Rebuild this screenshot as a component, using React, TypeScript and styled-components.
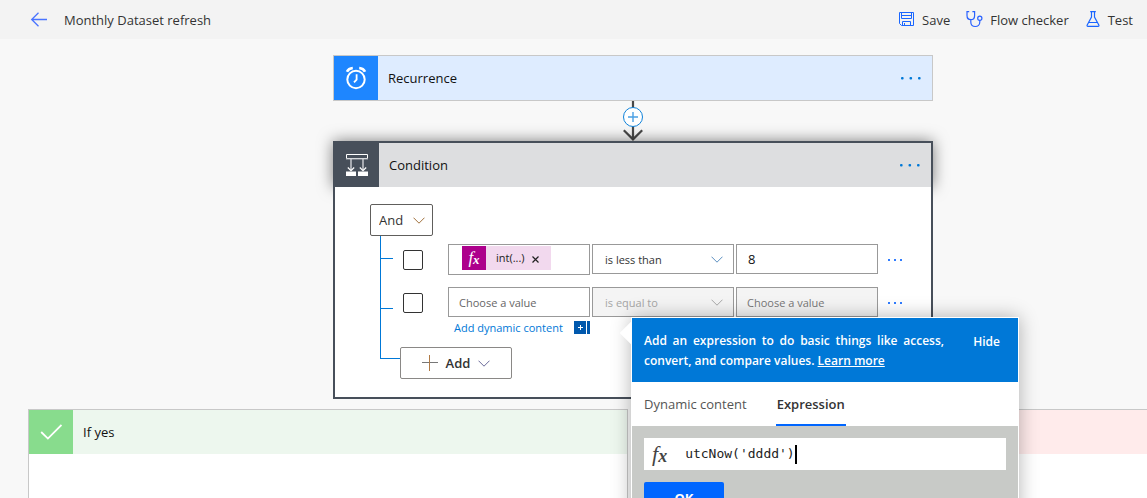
import React from "react";
import styled, { createGlobalStyle, css } from "styled-components";

const blue = "#0078d7";
const line = "#c8c8c8";
const slate = "#474f5a";

const GlobalStyle = createGlobalStyle`
  *, *::before, *::after { box-sizing: border-box; }
  body {
    margin: 0;
    background: #f8f8f8;
    color: #111;
    font: 13px/20px "Open Sans", "Noto Sans", sans-serif;
    overflow: hidden;
  }
  button, input, select { font: inherit; color: inherit; margin: 0; }
  button { cursor: pointer; }
`;

const Page = styled.div`
  height: 100vh;
  display: flex;
  flex-direction: column;
  overflow: hidden;
`;

const TopBar = styled.header`
  flex: none;
  height: 39px;
  padding: 0 14px 0 30px;
  display: flex;
  align-items: center;
  background: #f3f3f3;
  color: #333;
`;

const FlowTitle = styled.h1`
  flex: 1;
  margin: 0 0 0 16px;
  font-size: 13px;
  font-weight: 400;
`;

const Commands = styled.nav`
  display: flex;
  gap: 16px;
`;

const Command = styled.button`
  display: flex;
  align-items: center;
  gap: 7px;
  padding: 0;
  border: 0;
  background: none;
  white-space: nowrap;
`;

const Canvas = styled.main`
  flex: 1;
  padding: 16px 28px 0;
`;

const Flow = styled.div`
  min-width: 1210px;
  display: flex;
  flex-direction: column;
  align-items: center;
`;

const Step = styled.section`
  position: relative;
  width: 600px;
`;

const StepHeader = styled.div<{ $bg: string; $selected?: boolean }>`
  display: flex;
  align-items: center;
  height: 46px;
  padding-right: 10px;
  border: 1px solid ${line};
  background: ${(p) => p.$bg};
  ${(p) =>
    p.$selected &&
    css`
      border: 2px solid ${slate};
      border-bottom: 0;
      box-shadow: 0 0 15px rgba(0, 0, 0, 0.5);
    `}
`;

const StepIcon = styled.div<{ $bg: string }>`
  width: 44px;
  height: 44px;
  display: grid;
  place-items: center;
  background: ${(p) => p.$bg};
`;

const StepTitle = styled.h2`
  flex: 1;
  margin: 0 0 0 10px;
  font-size: 13px;
  font-weight: 400;
`;

const IconButton = styled.button`
  display: flex;
  padding: 0;
  border: 0;
  background: none;
  color: ${blue};
`;

const ConditionBody = styled.div`
  position: relative;
  padding: 17px 0 18px 35px;
  border: 2px solid ${slate};
  border-top: 0;
  background: #fff;
`;

const SelectWrap = styled.div<{ $w: number }>`
  position: relative;
  align-self: start;
  width: ${(p) => p.$w}px;
  svg {
    position: absolute;
    right: ${(p) => (p.$w > 100 ? 11 : 8)}px;
    top: 50%;
    margin-top: -3px;
    pointer-events: none;
  }
`;

const GroupSelect = styled.select`
  display: block;
  width: 100%;
  height: 32px;
  padding: 0 8px;
  appearance: none;
  border: 1px solid #605e5c;
  border-radius: 2px;
  background: #fff;
  color: #333;
`;

const fieldStyle = css`
  display: block;
  width: 100%;
  height: 30px;
  border: 1px solid #999;
  border-radius: 0;
  background: #fff;
  color: #333;
  font-size: 11px;
  &:disabled {
    background: #f4f4f4;
    color: #a6a6a6;
    opacity: 1;
  }
`;

const OperatorSelect = styled.select`
  ${fieldStyle}
  appearance: none;
  padding: 2px 12px 0;
`;

const ValueInput = styled.input`
  ${fieldStyle}
  padding: 0 10px;
  &::placeholder {
    color: #666;
    opacity: 1;
  }
  &:disabled::placeholder {
    color: #777;
  }
`;

const NumberInput = styled(ValueInput)`
  padding: 0 11px;
  font-size: 13px;
  color: #111;
`;

const Branch = styled.div`
  margin-left: 10px;
  padding-top: 8px;
  border-left: 1px solid ${blue};
  display: flex;
  flex-direction: column;
  gap: 12px;
`;

const Row = styled.div`
  display: flex;
  align-items: flex-start;
`;

const Tick = styled.span<{ $drop: number }>`
  width: 12px;
  height: 1px;
  margin-top: ${(p) => p.$drop}px;
  background: ${blue};
`;

const Check = styled.input`
  appearance: none;
  width: 20px;
  height: 20px;
  margin: 6px 25px 0 10px;
  border: 1px solid #333;
  border-radius: 2px;
  background: #fff;
`;

const Fields = styled.div`
  display: grid;
  grid-template-columns: 142px 142px 142px;
  gap: 2px;
`;

const TokenField = styled.div`
  height: 31px;
  padding: 1px 13px;
  border: 1px solid #999;
`;

const Token = styled.span`
  display: inline-flex;
  align-items: center;
  height: 24px;
  padding-right: 12px;
  background: #f2d9ee;
  color: #222;
  font-size: 11px;
  vertical-align: top;
`;

const Fx = styled.span<{ $size: number }>`
  font: italic ${(p) => p.$size}px/20px "Liberation Serif", serif;
  sub {
    font-size: ${(p) => p.$size - 4}px;
    font-weight: 700;
    line-height: 0;
    vertical-align: -1px;
  }
`;

const TokenIcon = styled.span`
  width: 24px;
  height: 24px;
  margin-right: 10px;
  display: grid;
  place-items: center;
  background: #ad008c;
  color: #fff;
`;

const TokenRemove = styled.button`
  display: flex;
  margin-left: 7px;
  padding: 2px 0 0;
  border: 0;
  background: none;
`;

const RowMenu = styled(IconButton)`
  margin: 14px 0 0 9px;
  color: #2f7cff;
`;

const DynamicLine = styled.div`
  display: flex;
  align-items: center;
  justify-content: space-between;
  height: 13px;
  margin-top: 4px;
  padding-left: 6px;
  font-size: 11px;
  line-height: 13px;
  white-space: nowrap;
  a {
    color: ${blue};
    text-decoration: none;
  }
`;

const Footer = styled.div`
  display: flex;
  margin-left: 10px;
`;

const Elbow = styled.span`
  width: 20px;
  height: 25px;
  border-left: 1px solid ${blue};
  border-bottom: 1px solid ${blue};
`;

const AddButton = styled.button`
  display: flex;
  align-items: center;
  justify-content: center;
  gap: 8px;
  width: 112px;
  height: 32px;
  margin-top: 13px;
  padding: 0;
  border: 1px solid #8a8886;
  border-radius: 2px;
  background: #fff;
  color: #333;
  font-weight: 600;
`;

const Branches = styled.div`
  display: grid;
  grid-template-columns: 600px 600px;
  gap: 10px;
  margin-top: 10px;
`;

const BranchCard = styled.section`
  min-height: 200px;
  border: 1px solid ${line};
  background: #fff;
`;

const BranchHeader = styled.div<{ $bg: string }>`
  display: flex;
  align-items: center;
  height: 44px;
  background: ${(p) => p.$bg};
`;

const Panel = styled.aside`
  position: absolute;
  z-index: 2;
  left: 298px;
  top: 176px;
  width: 388px;
  border: 1px solid #fff;
  background: #fff;
  box-shadow: 0 0 18px rgba(0, 0, 0, 0.3);
  &::before {
    content: "";
    position: absolute;
    z-index: -1;
    left: -9px;
    top: 7px;
    width: 16px;
    height: 16px;
    background: #fff;
    transform: rotate(45deg);
  }
`;

const PanelIntro = styled.div`
  display: flex;
  align-items: flex-start;
  justify-content: space-between;
  height: 64px;
  padding: 13px 18px 0 12px;
  background: ${blue};
  color: #fff;
  font-size: 12px;
  p {
    width: 300px;
    margin: 0;
    font-weight: 600;
    text-align: justify;
  }
  a {
    color: inherit;
  }
`;

const HideButton = styled.button`
  padding: 1px 0 0;
  border: 0;
  background: none;
  font-weight: 600;
`;

const Tabs = styled.div`
  display: flex;
  gap: 28px;
  height: 44px;
  padding-left: 11px;
  background: #fff;
`;

const Tab = styled.button<{ $active?: boolean }>`
  padding: 2px 1px 0;
  border: 0;
  border-bottom: 2px solid ${(p) => (p.$active ? "#0066ff" : "transparent")};
  background: none;
  color: ${(p) => (p.$active ? "#333" : "#555")};
  font-weight: ${(p) => (p.$active ? 600 : 400)};
`;

const Editor = styled.div`
  padding: 12px;
  background: #c8cac7;
`;

const ExpressionBox = styled.label`
  display: flex;
  align-items: center;
  height: 32px;
  padding-left: 8px;
  background: #fff;
  color: #444;
`;

const ExpressionInput = styled.input`
  width: 14ch;
  margin-left: 18px;
  padding: 0;
  border: 0;
  outline: 0;
  background: none;
  color: #222;
  font: 13px/20px "DejaVu Sans Mono", monospace;
`;

const Caret = styled.span`
  width: 2px;
  height: 19px;
  background: #000;
`;

const OkButton = styled.button`
  width: 80px;
  height: 32px;
  margin-top: 12px;
  padding: 0;
  border: 0;
  border-radius: 2px;
  background: #0066ff;
  color: #fff;
  font-weight: 700;
`;

const Dots = ({ small }: { small?: boolean }) => {
  const step = small ? 6 : 8.5;
  const size = small ? 2 : 2.6;
  const w = small ? 16 : 22;
  return (
    <svg width={w} height={4} viewBox={`0 0 ${w} 4`} fill="currentColor" aria-hidden="true">
      {[0, 1, 2].map((i) => (
        <rect key={i} x={1 + i * step} y={1} width={size} height={size} rx={small ? 0 : 1} />
      ))}
    </svg>
  );
};

const Chevron = ({ color = "#777" }: { color?: string }) => (
  <svg width="12" height="7" viewBox="0 0 12 7" fill="none" stroke={color} aria-hidden="true">
    <path d="M.5.7 6 6.2 11.5.7" />
  </svg>
);

const fxGlyph = (size: number) => (
  <Fx $size={size}>
    f<sub>x</sub>
  </Fx>
);

const Connector = () => (
  <svg width="22" height="40" viewBox="0 0 22 40" fill="none" aria-hidden="true">
    <path d="M11 0V38M1.8 29.2 11 38.4 20.2 29.2" stroke="#484848" strokeWidth="2.2" />
    <circle cx="11" cy="16" r="9.5" fill="#fff" stroke="#0f82da" />
    <path d="M6 16H16M11 11V21" stroke="#4aa0e4" strokeWidth="1.4" />
  </svg>
);

export default function App() {
  return (
    <Page>
      <GlobalStyle />
      <TopBar>
        <IconButton aria-label="Back">
          <svg width="18" height="16" viewBox="0 0 18 16" fill="none" stroke="#4a74ff" strokeWidth="1.3">
            <path d="M8.5.7 1.7 7.5l6.8 6.8M1.7 7.5H17" />
          </svg>
        </IconButton>
        <FlowTitle>Monthly Dataset refresh</FlowTitle>
        <Commands>
          <Command>
            <svg width="16" height="16" viewBox="0 0 16 16" fill="none" stroke="#1a66ff">
              <path d="M.5.5H14.5V13.5H2.5L.5 11.5Z" />
              <path d="M2.5.5V6.5H12.5V.5M3.5 13.5V9.5H11.5V13.5M5.5 11V13.5M2.5 3.5H12.5" />
            </svg>
            Save
          </Command>
          <Command>
            <svg width="17" height="17" viewBox="0 0 17 17" fill="none" stroke="#2a62ff" strokeWidth="1.2">
              <path d="M3.2.6H1V4.4C1 7 2.6 8.7 4.8 8.7S8.6 7 8.6 4.4V.6H6.4M4.8 8.7V11C4.8 13.8 6.8 15.5 9.3 15.5S13.8 13.8 13.8 11V9.3" />
              <circle cx="13.8" cy="7.2" r="2.1" />
            </svg>
            Flow checker
          </Command>
          <Command>
            <svg width="16" height="17" viewBox="0 0 16 17" fill="none" stroke="#1a66ff" strokeWidth="1.2">
              <path d="M5.2.7H10.8M6.5.7V6L2.2 14C1.8 14.8 2.1 15.4 3 15.4H13C13.9 15.4 14.2 14.8 13.8 14L9.5 6V.7M3.8 11.5H12.2" />
            </svg>
            Test
          </Command>
        </Commands>
      </TopBar>

      <Canvas>
        <Flow>
          <Step>
            <StepHeader $bg="#deecff">
              <StepIcon $bg="#1e86ff">
                <svg width="22" height="24" viewBox="0 0 22 24" fill="none" stroke="#fff">
                  <circle cx="11" cy="13.5" r="8.7" strokeWidth="2" />
                  <path d="M2 5.8C3 3.4 5 2.2 7.8 2M20 5.8C19 3.4 17 2.2 14.2 2" strokeWidth="2.6" />
                  <path d="M11.6 8.2V13.6L9 16.4" strokeWidth="1.8" />
                </svg>
              </StepIcon>
              <StepTitle>Recurrence</StepTitle>
              <IconButton aria-label="Recurrence menu">
                <Dots />
              </IconButton>
            </StepHeader>
          </Step>

          <Connector />

          <Step>
            <StepHeader $bg="#dddee0" $selected>
              <StepIcon $bg={slate}>
                <svg width="22" height="22" viewBox="0 0 22 22" fill="none" stroke="#fff">
                  <path d="M.5.5H21.5V4.5H.5Z" />
                  <path d="M0 5H22" stroke="#aeb2b8" />
                  <path d="M5 5V16M17 5V16" stroke="#d0d2d6" strokeWidth="1.4" />
                  <path d="M1.8 13.5 5 16.7 8.2 13.5M13.8 13.5 17 16.7 20.2 13.5" strokeWidth="1.2" />
                  <path d="M0 17.5H10V22H0ZM12 17.5H22V22H12Z" fill="#fff" stroke="none" />
                </svg>
              </StepIcon>
              <StepTitle>Condition</StepTitle>
              <IconButton aria-label="Condition menu">
                <Dots />
              </IconButton>
            </StepHeader>

            <ConditionBody>
              <SelectWrap $w={63}>
                <GroupSelect aria-label="Group operator" defaultValue="And">
                  <option>And</option>
                </GroupSelect>
                <Chevron color="#a0703c" />
              </SelectWrap>

              <Branch>
                <Row>
                  <Tick $drop={14} />
                  <Check type="checkbox" aria-label="Select first row" />
                  <Fields>
                    <TokenField>
                      <Token>
                        <TokenIcon>{fxGlyph(17)}</TokenIcon>
                        int(...)
                        <TokenRemove aria-label="Remove int(...)">
                          <svg width="7" height="7" viewBox="0 0 7 7" stroke="#222" strokeWidth="1.2">
                            <path d="M.5.5 6.5 6.5M6.5.5.5 6.5" />
                          </svg>
                        </TokenRemove>
                      </Token>
                    </TokenField>
                    <SelectWrap $w={142}>
                      <OperatorSelect aria-label="First operator" defaultValue="is less than">
                        <option>is less than</option>
                      </OperatorSelect>
                      <Chevron color="#5b8fc0" />
                    </SelectWrap>
                    <NumberInput aria-label="First value" defaultValue="8" />
                  </Fields>
                  <RowMenu aria-label="First row menu">
                    <Dots small />
                  </RowMenu>
                </Row>
                <Row>
                  <Tick $drop={21} />
                  <Check type="checkbox" aria-label="Select second row" />
                  <Fields>
                    <div>
                      <ValueInput aria-label="Second left value" placeholder="Choose a value" />
                      <DynamicLine>
                        <a href="#dynamic">Add dynamic content</a>
                        <svg width="16" height="13" viewBox="0 0 16 13" aria-hidden="true">
                          <path d="M0 0H12V13H0ZM13 0H16V13H13Z" fill="#0058ad" />
                          <path d="M4 6.5H9M6.5 4V9" stroke="#fff" />
                        </svg>
                      </DynamicLine>
                    </div>
                    <SelectWrap $w={142}>
                      <OperatorSelect aria-label="Second operator" defaultValue="is equal to" disabled>
                        <option>is equal to</option>
                      </OperatorSelect>
                      <Chevron color="#a8a8a8" />
                    </SelectWrap>
                    <ValueInput aria-label="Second right value" placeholder="Choose a value" disabled />
                  </Fields>
                  <RowMenu aria-label="Second row menu">
                    <Dots small />
                  </RowMenu>
                </Row>
              </Branch>
              <Footer>
                <Elbow />
                <AddButton>
                  <svg width="16" height="16" viewBox="0 0 16 16" fill="none">
                    <path d="M0 7.5H16" stroke="#777" />
                    <path d="M7.5 0V16" stroke="#b07a45" />
                  </svg>
                  Add
                  <Chevron color="#6a6a9a" />
                </AddButton>
              </Footer>
            </ConditionBody>

            <Panel>
              <PanelIntro>
                <p>
                  Add an expression to do basic things like access, convert, and compare values.{" "}
                  <a href="#learn">Learn more</a>
                </p>
                <HideButton>Hide</HideButton>
              </PanelIntro>
              <Tabs role="tablist">
                <Tab role="tab">Dynamic content</Tab>
                <Tab role="tab" aria-selected $active>
                  Expression
                </Tab>
              </Tabs>
              <Editor>
                <ExpressionBox>
                  {fxGlyph(22)}
                  <ExpressionInput aria-label="Expression" defaultValue="utcNow('dddd')" />
                  <Caret />
                </ExpressionBox>
                <OkButton>OK</OkButton>
              </Editor>
            </Panel>
          </Step>

          <Branches>
            <BranchCard>
              <BranchHeader $bg="#edf7ee">
                <StepIcon $bg="#88dc8d">
                  <svg width="22" height="16" viewBox="0 0 22 16" fill="none" stroke="#fff" strokeWidth="1.8">
                    <path d="M1.2 8 7.9 14.6 21.5 1" />
                  </svg>
                </StepIcon>
                <StepTitle>If yes</StepTitle>
              </BranchHeader>
            </BranchCard>
            <BranchCard>
              <BranchHeader $bg="#ffebeb" />
            </BranchCard>
          </Branches>
        </Flow>
      </Canvas>
    </Page>
  );
}
